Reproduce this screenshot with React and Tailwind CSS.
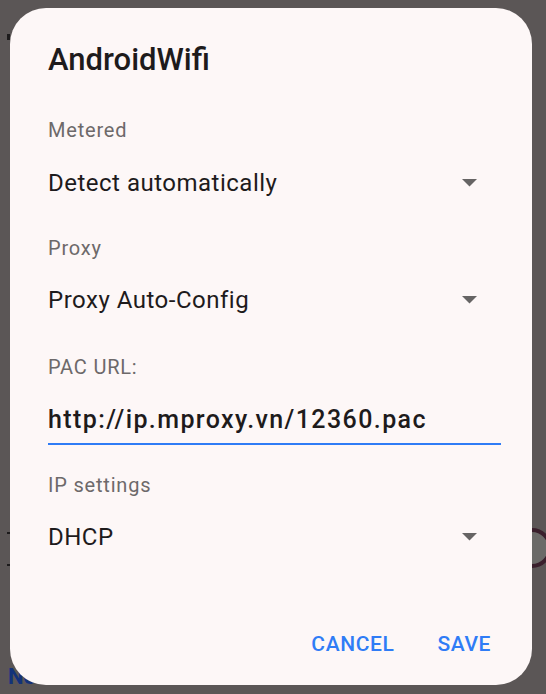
import React from 'react';

const Arrow = () => (
  <svg width="15" height="8" viewBox="0 0 15 8" className="shrink-0">
    <path d="M0 0 H15 L7.5 7.5 Z" fill="#666464" />
  </svg>
);

// label on top, control below
const Field = ({ label, children, gap = 'gap-[27px]' }) => (
  <div className={`flex flex-col ${gap}`}>
    <div className="text-[20px] leading-[24px] tracking-[0.8px] text-[#6d696a]">{label}</div>
    {children}
  </div>
);

const Spinner = ({ value }) => (
  <div className="flex items-center justify-between pr-[24px]">
    <span className="text-[24px] leading-[28px] tracking-[0.5px] text-[#1e1b1c]">{value}</span>
    <Arrow />
  </div>
);

export default function App() {
  return (
    <div
      className="relative w-[546px] h-[694px] overflow-hidden bg-[#5b5656]"
      style={{ fontFamily: 'Roboto, "Liberation Sans", sans-serif' }}
    >
      {/* dimmed screen behind the dialog */}
      <div className="absolute left-[7px] top-[34px] w-[3px] h-[6px] bg-[#1d1b1c]" />
      <div className="absolute left-[7px] top-[532px] w-[3px] h-[34px] border-y-2 border-[#1d1b1c]" />
      <div className="absolute left-[8px] top-[664px] text-[22px] font-bold leading-[26px] text-[#13327a]">Network</div>
      <div className="absolute left-[512px] top-[528px] w-[40px] h-[40px] rounded-full border-[4px] border-[#3a1f2c] bg-[#6b6a68]" />

      <div className="relative z-10 ml-[10px] mt-[8px] w-[522px] h-[677px] rounded-[36px] bg-[#fdf7f7] pl-[38px] pr-[31px] pt-[34px] flex flex-col">
        <h1 className="text-[31px] leading-[36px] font-medium text-[#1e1b1c]">AndroidWifi</h1>

        <div className="mt-[40px] flex flex-col gap-[39px]">
          <Field label="Metered">
            <Spinner value="Detect automatically" />
          </Field>

          <Field label="Proxy" gap="gap-[26px]">
            <Spinner value="Proxy Auto-Config" />
          </Field>

          <div className="mt-[2px] flex flex-col">
            <Field label="PAC URL:">
              <div className="text-[25px] leading-[28px] font-medium tracking-[1.4px] text-[#1e1b1c]">
                http://ip.mproxy.vn/12360.pac
              </div>
            </Field>
            <div className="mt-[9px] h-[2px] bg-[#2f7cf6]" />
          </div>

          <div className="-mt-[11px]">
            <Field label="IP settings" gap="gap-[26px]">
              <Spinner value="DHCP" />
            </Field>
          </div>
        </div>

        <div className="mt-[81px] mr-[10px] flex justify-end gap-[43px] text-[21px] leading-[24px] font-medium tracking-[0.6px] text-[#2f7cf6]">
          <button>CANCEL</button>
          <button>SAVE</button>
        </div>
      </div>
    </div>
  );
}
